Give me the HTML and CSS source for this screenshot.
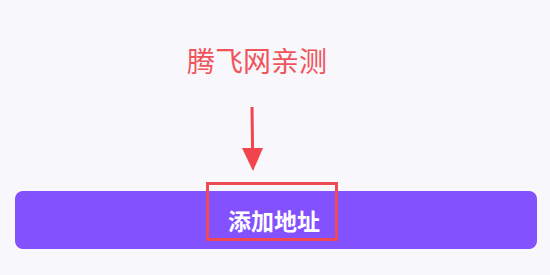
FILE: index.html
```html
<!DOCTYPE html>
<html lang="zh-CN">
<head>
<meta charset="utf-8">
<link rel="stylesheet" href="styles.css">
</head>
<body>
<div class="page">
  <div class="title">腾飞网亲测</div>
  <svg class="arrow" width="30" height="68" viewBox="0 0 30 68">
    <line x1="14" y1="2" x2="14.6" y2="46" stroke="#f2444c" stroke-width="3"/>
    <polygon points="4,43 25,43 15,66" fill="#f2444c"/>
  </svg>
  <div class="btn-wrap">
    <div class="btn">添加地址</div>
    <div class="mark"></div>
  </div>
</div>
</body>
</html>
```

FILE: styles.css
```css
html, body {
  margin: 0;
  padding: 0;
  background: #f8f7fb;
}
.page {
  width: 550px;
  height: 275px;
  display: flex;
  flex-direction: column;
  font-family: "Noto Sans CJK SC", "Noto Sans", sans-serif;
}
.title {
  margin-top: 46px;
  margin-left: 187px;
  font-size: 28px;
  line-height: 28px;
  color: #f0545b;
  font-weight: 400;
}
.arrow {
  display: block;
  margin-top: 31px;
  margin-left: 238px;
}
.btn-wrap {
  position: relative;
  margin: 18px 13px 0 15px;
}
.btn {
  height: 58px;
  border-radius: 8px;
  background: #8451fe;
  color: #ffffff;
  font-size: 23px;
  font-weight: 700;
  display: flex;
  align-items: center;
  justify-content: center;
  padding-right: 4px;
}
.mark {
  position: absolute;
  left: 191px;
  top: -9px;
  width: 126px;
  height: 53px;
  border: 3px solid #ee4a55;
}
```
